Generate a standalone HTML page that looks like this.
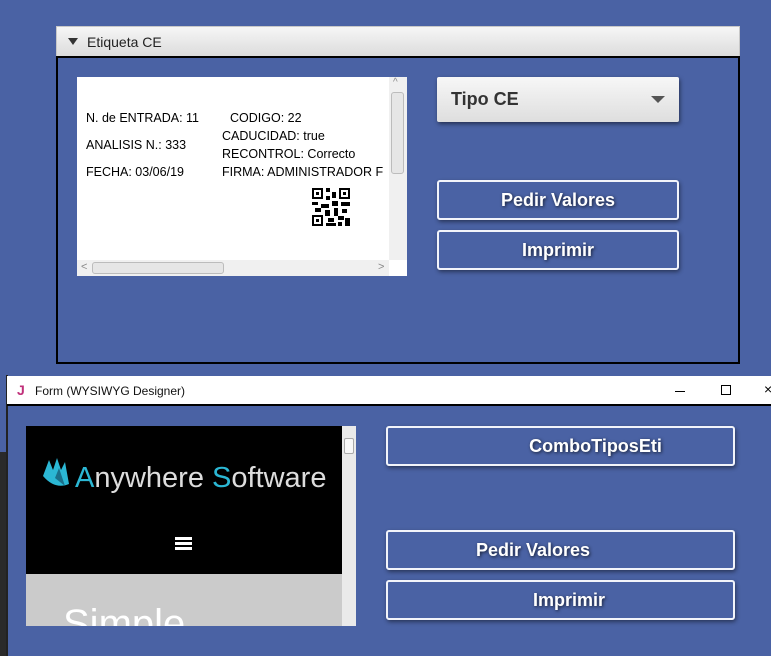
<!DOCTYPE html>
<html><head><style>
body{margin:0;width:771px;height:656px;background:#4a62a4;position:relative;overflow:hidden;font-family:"Liberation Sans",sans-serif}
.a{position:absolute;box-sizing:border-box}
.btn{border:2px solid #f2f4fa;border-radius:3px;box-shadow:1px 2px 4px rgba(0,0,0,.45);color:#fff;font-weight:bold;font-size:18px;text-shadow:1px 1px 3px rgba(0,0,0,.7);display:flex;align-items:center;justify-content:center}
.t{position:absolute;font-size:12.5px;color:#000;white-space:nowrap}
</style></head><body>
<!-- top panel -->
<div class="a" style="left:56px;top:26px;width:684px;height:31px;background:linear-gradient(#f6f6f6,#dcdcdc);border:1px solid #c8c8c8"></div>
<div class="a" style="left:68px;top:38px;width:0;height:0;border-left:5px solid transparent;border-right:5px solid transparent;border-top:7px solid #333"></div>
<div class="t" style="left:87px;top:34px;font-size:14px;color:#222">Etiqueta CE</div>
<div class="a" style="left:56px;top:56px;width:684px;height:308px;border:2px solid #000"></div>
<div class="a" style="left:77px;top:77px;width:330px;height:199px;background:#fff"></div>
<div class="t" style="left:86px;top:111px">N. de ENTRADA: 11</div>
<div class="t" style="left:230px;top:111px">CODIGO: 22</div>
<div class="t" style="left:222px;top:129px">CADUCIDAD: true</div>
<div class="t" style="left:86px;top:138px">ANALISIS N.: 333</div>
<div class="t" style="left:222px;top:147px">RECONTROL: Correcto</div>
<div class="t" style="left:86px;top:165px">FECHA: 03/06/19</div>
<div class="t" style="left:222px;top:165px;width:167px;overflow:hidden">FIRMA: ADMINISTRADOR F</div>
<svg class="a" style="left:312px;top:188px" width="38" height="38" viewBox="0 0 38 38"><g fill="#000"><rect x="0" y="0" width="11" height="11"/><rect x="27" y="0" width="11" height="11"/><rect x="0" y="27" width="11" height="11"/></g><g fill="#fff"><rect x="2" y="2" width="7" height="7"/><rect x="29" y="2" width="7" height="7"/><rect x="2" y="29" width="7" height="7"/></g><g fill="#000"><rect x="4" y="4" width="3" height="3"/><rect x="31" y="4" width="3" height="3"/><rect x="4" y="31" width="3" height="3"/><rect x="14" y="0" width="4" height="4"/><rect x="20" y="4" width="4" height="6"/><rect x="14" y="8" width="4" height="4"/><rect x="0" y="14" width="6" height="3"/><rect x="9" y="16" width="8" height="4"/><rect x="20" y="13" width="6" height="5"/><rect x="29" y="14" width="9" height="4"/><rect x="3" y="20" width="6" height="4"/><rect x="13" y="22" width="5" height="6"/><rect x="22" y="20" width="4" height="8"/><rect x="30" y="21" width="5" height="4"/><rect x="16" y="30" width="6" height="4"/><rect x="26" y="28" width="6" height="4"/><rect x="33" y="30" width="5" height="8"/><rect x="14" y="35" width="10" height="3"/><rect x="26" y="34" width="4" height="4"/></g></svg>
<div class="a" style="left:389px;top:77px;width:18px;height:183px;background:#f0f0f0"></div>
<div class="a" style="left:391px;top:92px;width:13px;height:82px;background:#e6e6e6;border:1px solid #bcbcbc;border-radius:3px"></div>
<div class="a" style="left:77px;top:260px;width:312px;height:16px;background:#f0f0f0"></div>
<div class="a" style="left:92px;top:262px;width:132px;height:12px;background:#e6e6e6;border:1px solid #bcbcbc;border-radius:3px"></div>
<div class="t" style="left:393px;top:77px;color:#888;font-size:10px">^</div>
<div class="t" style="left:81px;top:261px;color:#888;font-size:11px">&lt;</div>
<div class="t" style="left:378px;top:261px;color:#888;font-size:11px">&gt;</div>
<div class="a" style="left:437px;top:77px;width:242px;height:45px;background:linear-gradient(#f7f7f7,#dedede);border-radius:2px;box-shadow:1px 2px 4px rgba(0,0,0,.5);font-weight:bold;font-size:18px;color:#333;padding:12px 0 0 14px">Tipo CE</div>
<div class="a" style="left:651px;top:96px;border-left:7px solid transparent;border-right:7px solid transparent;border-top:7px solid #555"></div>
<div class="a btn" style="left:437px;top:180px;width:242px;height:40px">Pedir Valores</div>
<div class="a btn" style="left:437px;top:230px;width:242px;height:40px">Imprimir</div>
<!-- bottom window -->
<div class="a" style="left:0;top:452px;width:7px;height:204px;background:#2a2a2a"></div>
<div class="a" style="left:6px;top:375px;width:765px;height:281px;border-left:2px solid #222;background:#4a62a4"></div>
<div class="a" style="left:7px;top:376px;width:764px;height:30px;background:#fff;border-bottom:2px solid #000"></div>
<div class="t" style="left:17px;top:382px;color:#c0307a;font-weight:bold;font-size:14px">J</div>
<div class="t" style="left:35px;top:384px;font-size:12px;color:#111">Form (WYSIWYG Designer)</div>
<div class="a" style="left:675px;top:391px;width:10px;height:1px;background:#000"></div>
<div class="a" style="left:721px;top:385px;width:10px;height:10px;border:1px solid #000"></div>
<div class="t" style="left:764px;top:381px;font-size:14px">×</div>
<div class="a" style="left:26px;top:426px;width:316px;height:148px;background:#000;overflow:hidden">
<svg class="a" style="left:15px;top:30px" width="36" height="34" viewBox="0 0 36 34"><path d="M2 20 L8 4 L12 14 L16 2 L20 14 L24 6 L28 28 Q14 34 2 20Z" fill="#2bb7d4"/><path d="M14 22 L18 12 L24 30 Z" fill="#1a6f8a"/></svg>
<div class="t" style="left:49px;top:36px;font-size:29px;color:#ddd;letter-spacing:0px"><span style="color:#2bb7d4">A</span>nywhere <span style="color:#2bb7d4">S</span>oftware</div>
</div>
<div class="a" style="left:26px;top:574px;width:316px;height:52px;background:#cbcbcb;overflow:hidden"><div class="t" style="left:37px;top:28px;font-size:40px;color:#fff">Simple</div></div>
<div class="a" style="left:175px;top:537px;width:17px;height:3px;background:#fff;box-shadow:0 5px 0 #fff,0 10px 0 #fff"></div>
<div class="a" style="left:342px;top:426px;width:14px;height:200px;background:#eaeaea"></div>
<div class="a" style="left:344px;top:438px;width:10px;height:16px;background:#f8f8f8;border:1px solid #aaa;border-radius:2px"></div>
<div class="a btn" style="left:386px;top:426px;width:349px;height:40px;padding-left:70px">ComboTiposEti</div>
<div class="a btn" style="left:386px;top:530px;width:349px;height:40px;padding-right:55px">Pedir Valores</div>
<div class="a btn" style="left:386px;top:580px;width:349px;height:40px;padding-left:17px">Imprimir</div>
</body></html>
